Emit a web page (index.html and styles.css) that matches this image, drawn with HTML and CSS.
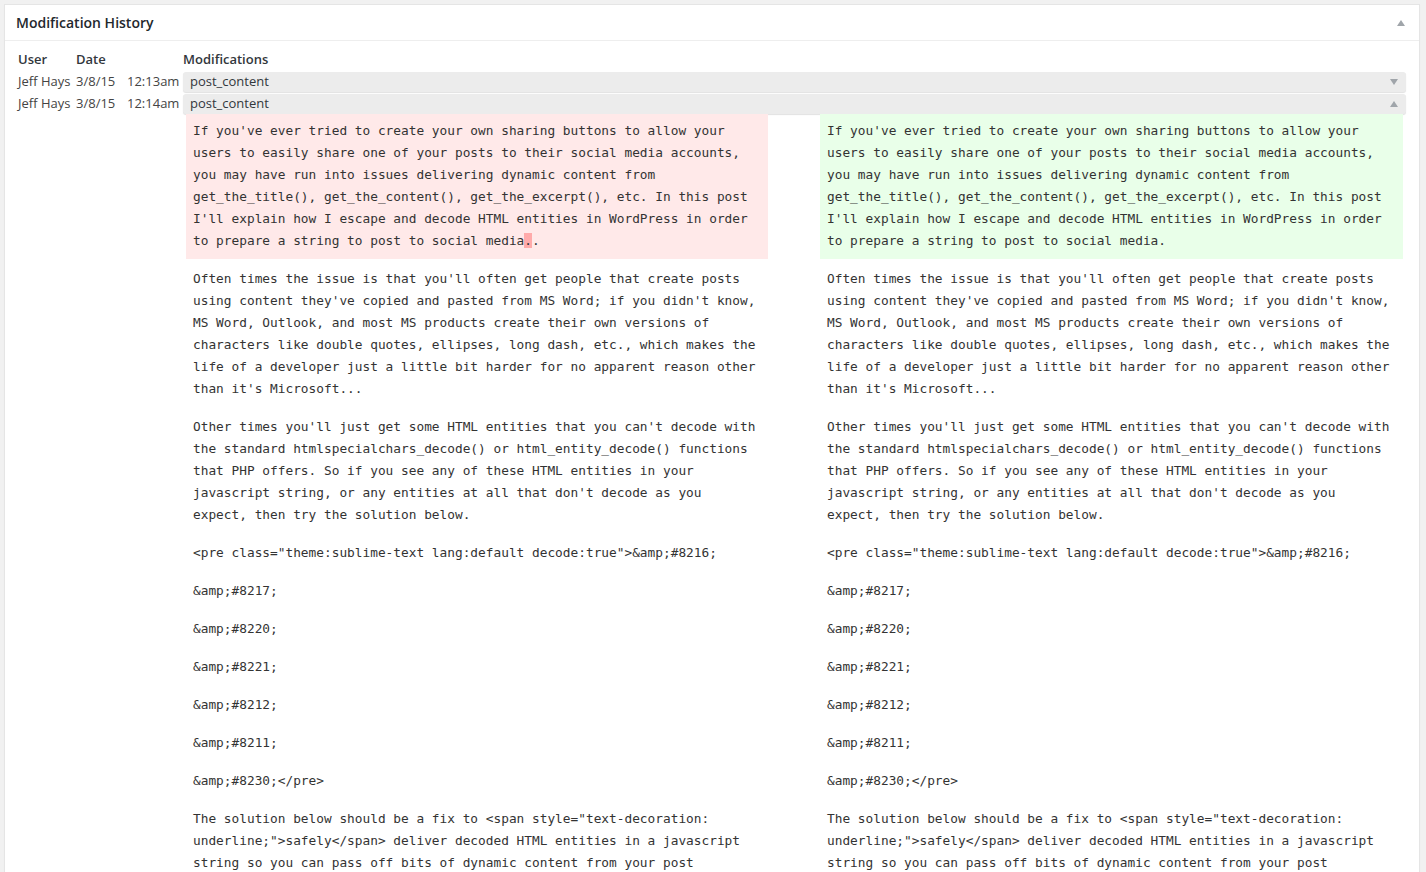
FILE: index.html
```html
<!DOCTYPE html>
<html>
<head>
<meta charset="utf-8">
<title>Modification History</title>
<link rel="stylesheet" href="styles.css">
</head>
<body>
<div class="postbox">
  <div class="hndle">
    <h3 class="title">Modification History</h3>
    <span class="tri tri-up tri-head"></span>
  </div>
  <div class="inside">
    <div class="history">
      <div class="th">User</div>
      <div class="th">Date</div>
      <div class="th"></div>
      <div class="th">Modifications</div>

      <div class="td">Jeff Hays</div>
      <div class="td">3/8/15</div>
      <div class="td">12:13am</div>
      <div class="td mod"><div class="bar"><span>post_content</span><span class="tri tri-down"></span></div></div>

      <div class="td">Jeff Hays</div>
      <div class="td">3/8/15</div>
      <div class="td">12:14am</div>
      <div class="td mod"><div class="bar"><span>post_content</span><span class="tri tri-up"></span></div></div>

      <div class="diffcell">
        <div class="diff">
          <div class="col">
            <div class="line deleted">If you've ever tried to create your own sharing buttons to allow your<br>users to easily share one of your posts to their social media accounts,<br>you may have run into issues delivering dynamic content from<br>get_the_title(), get_the_content(), get_the_excerpt(), etc. In this post<br>I'll explain how I escape and decode HTML entities in WordPress in order<br>to prepare a string to post to social media<del>.</del>.</div>
            <div class="line">Often times the issue is that you'll often get people that create posts<br>using content they've copied and pasted from MS Word; if you didn't know,<br>MS Word, Outlook, and most MS products create their own versions of<br>characters like double quotes, ellipses, long dash, etc., which makes the<br>life of a developer just a little bit harder for no apparent reason other<br>than it's Microsoft...</div>
            <div class="line">Other times you'll just get some HTML entities that you can't decode with<br>the standard htmlspecialchars_decode() or html_entity_decode() functions<br>that PHP offers. So if you see any of these HTML entities in your<br>javascript string, or any entities at all that don't decode as you<br>expect, then try the solution below.</div>
            <div class="line">&lt;pre class="theme:sublime-text lang:default decode:true"&gt;&amp;amp;#8216;</div>
            <div class="line">&amp;amp;#8217;</div>
            <div class="line">&amp;amp;#8220;</div>
            <div class="line">&amp;amp;#8221;</div>
            <div class="line">&amp;amp;#8212;</div>
            <div class="line">&amp;amp;#8211;</div>
            <div class="line">&amp;amp;#8230;&lt;/pre&gt;</div>
            <div class="line">The solution below should be a fix to &lt;span style="text-decoration:<br>underline;"&gt;safely&lt;/span&gt; deliver decoded HTML entities in a javascript<br>string so you can pass off bits of dynamic content from your post</div>
          </div>
          <div class="col">
            <div class="line added">If you've ever tried to create your own sharing buttons to allow your<br>users to easily share one of your posts to their social media accounts,<br>you may have run into issues delivering dynamic content from<br>get_the_title(), get_the_content(), get_the_excerpt(), etc. In this post<br>I'll explain how I escape and decode HTML entities in WordPress in order<br>to prepare a string to post to social media.</div>
            <div class="line">Often times the issue is that you'll often get people that create posts<br>using content they've copied and pasted from MS Word; if you didn't know,<br>MS Word, Outlook, and most MS products create their own versions of<br>characters like double quotes, ellipses, long dash, etc., which makes the<br>life of a developer just a little bit harder for no apparent reason other<br>than it's Microsoft...</div>
            <div class="line">Other times you'll just get some HTML entities that you can't decode with<br>the standard htmlspecialchars_decode() or html_entity_decode() functions<br>that PHP offers. So if you see any of these HTML entities in your<br>javascript string, or any entities at all that don't decode as you<br>expect, then try the solution below.</div>
            <div class="line">&lt;pre class="theme:sublime-text lang:default decode:true"&gt;&amp;amp;#8216;</div>
            <div class="line">&amp;amp;#8217;</div>
            <div class="line">&amp;amp;#8220;</div>
            <div class="line">&amp;amp;#8221;</div>
            <div class="line">&amp;amp;#8212;</div>
            <div class="line">&amp;amp;#8211;</div>
            <div class="line">&amp;amp;#8230;&lt;/pre&gt;</div>
            <div class="line">The solution below should be a fix to &lt;span style="text-decoration:<br>underline;"&gt;safely&lt;/span&gt; deliver decoded HTML entities in a javascript<br>string so you can pass off bits of dynamic content from your post</div>
          </div>
        </div>
      </div>
    </div>
  </div>
</div>
</body>
</html>
```

FILE: styles.css
```css
html, body {
  margin: 0;
  padding: 0;
  height: 100%;
  overflow: hidden;
  background: #f1f1f1;
  font-family: "Open Sans", "Liberation Sans", sans-serif;
  color: #333;
}

.postbox {
  margin: 4px 6px 0 4px;
  background: #fff;
  border: 1px solid #e5e5e5;
  box-shadow: 0 1px 1px rgba(0, 0, 0, 0.04);
  min-height: 1000px;
}

.hndle {
  height: 35px;
  border-bottom: 1px solid #eee;
  display: flex;
  align-items: center;
  justify-content: space-between;
  padding: 0 14px 0 11px;
}

.title {
  margin: 0;
  font-size: 14px;
  font-weight: 600;
  line-height: 19px;
  color: #23282d;
}

.tri {
  display: inline-block;
  width: 0;
  height: 0;
  border-left: 4px solid transparent;
  border-right: 4px solid transparent;
}

.tri-up {
  border-bottom: 6px solid #a0a5aa;
}

.tri-down {
  border-top: 6px solid #a0a5aa;
}

.inside {
  padding: 7px 13px 0 13px;
}

.history {
  display: grid;
  grid-template-columns: 58px 51px 56px 1fr;
  font-size: 13px;
  line-height: 22px;
}

.th {
  font-weight: 600;
  color: #32373c;
  height: 22px;
}

.th:last-child {
  padding-left: 1px;
}

.td {
  height: 22px;
  white-space: nowrap;
  color: #444;
}

.mod {
  padding-top: 2px;
  height: 20px;
}

.bar {
  height: 20px;
  background: #ececec;
  border-radius: 3px;
  box-shadow: 0 1px 1px rgba(0, 0, 0, 0.12);
  display: flex;
  align-items: center;
  justify-content: space-between;
  padding: 0 8px 1px 7px;
  box-sizing: border-box;
  line-height: 19px;
  color: #32373c;
}

.diffcell {
  grid-column: 4;
  padding: 0 3px;
}

.diff {
  display: grid;
  grid-template-columns: 582px 583px;
  column-gap: 52px;
  font-family: "DejaVu Sans Mono", "Liberation Mono", monospace;
  font-size: 12.8px;
  line-height: 22px;
  color: #333;
}

.line {
  padding: 6px 7px 7px 7px;
  margin-bottom: 3px;
  white-space: nowrap;
}

.deleted {
  background: #ffe9e9;
}

.added {
  background: #e9ffe9;
}

.deleted del {
  background: #faa;
  text-decoration: none;
}
```
